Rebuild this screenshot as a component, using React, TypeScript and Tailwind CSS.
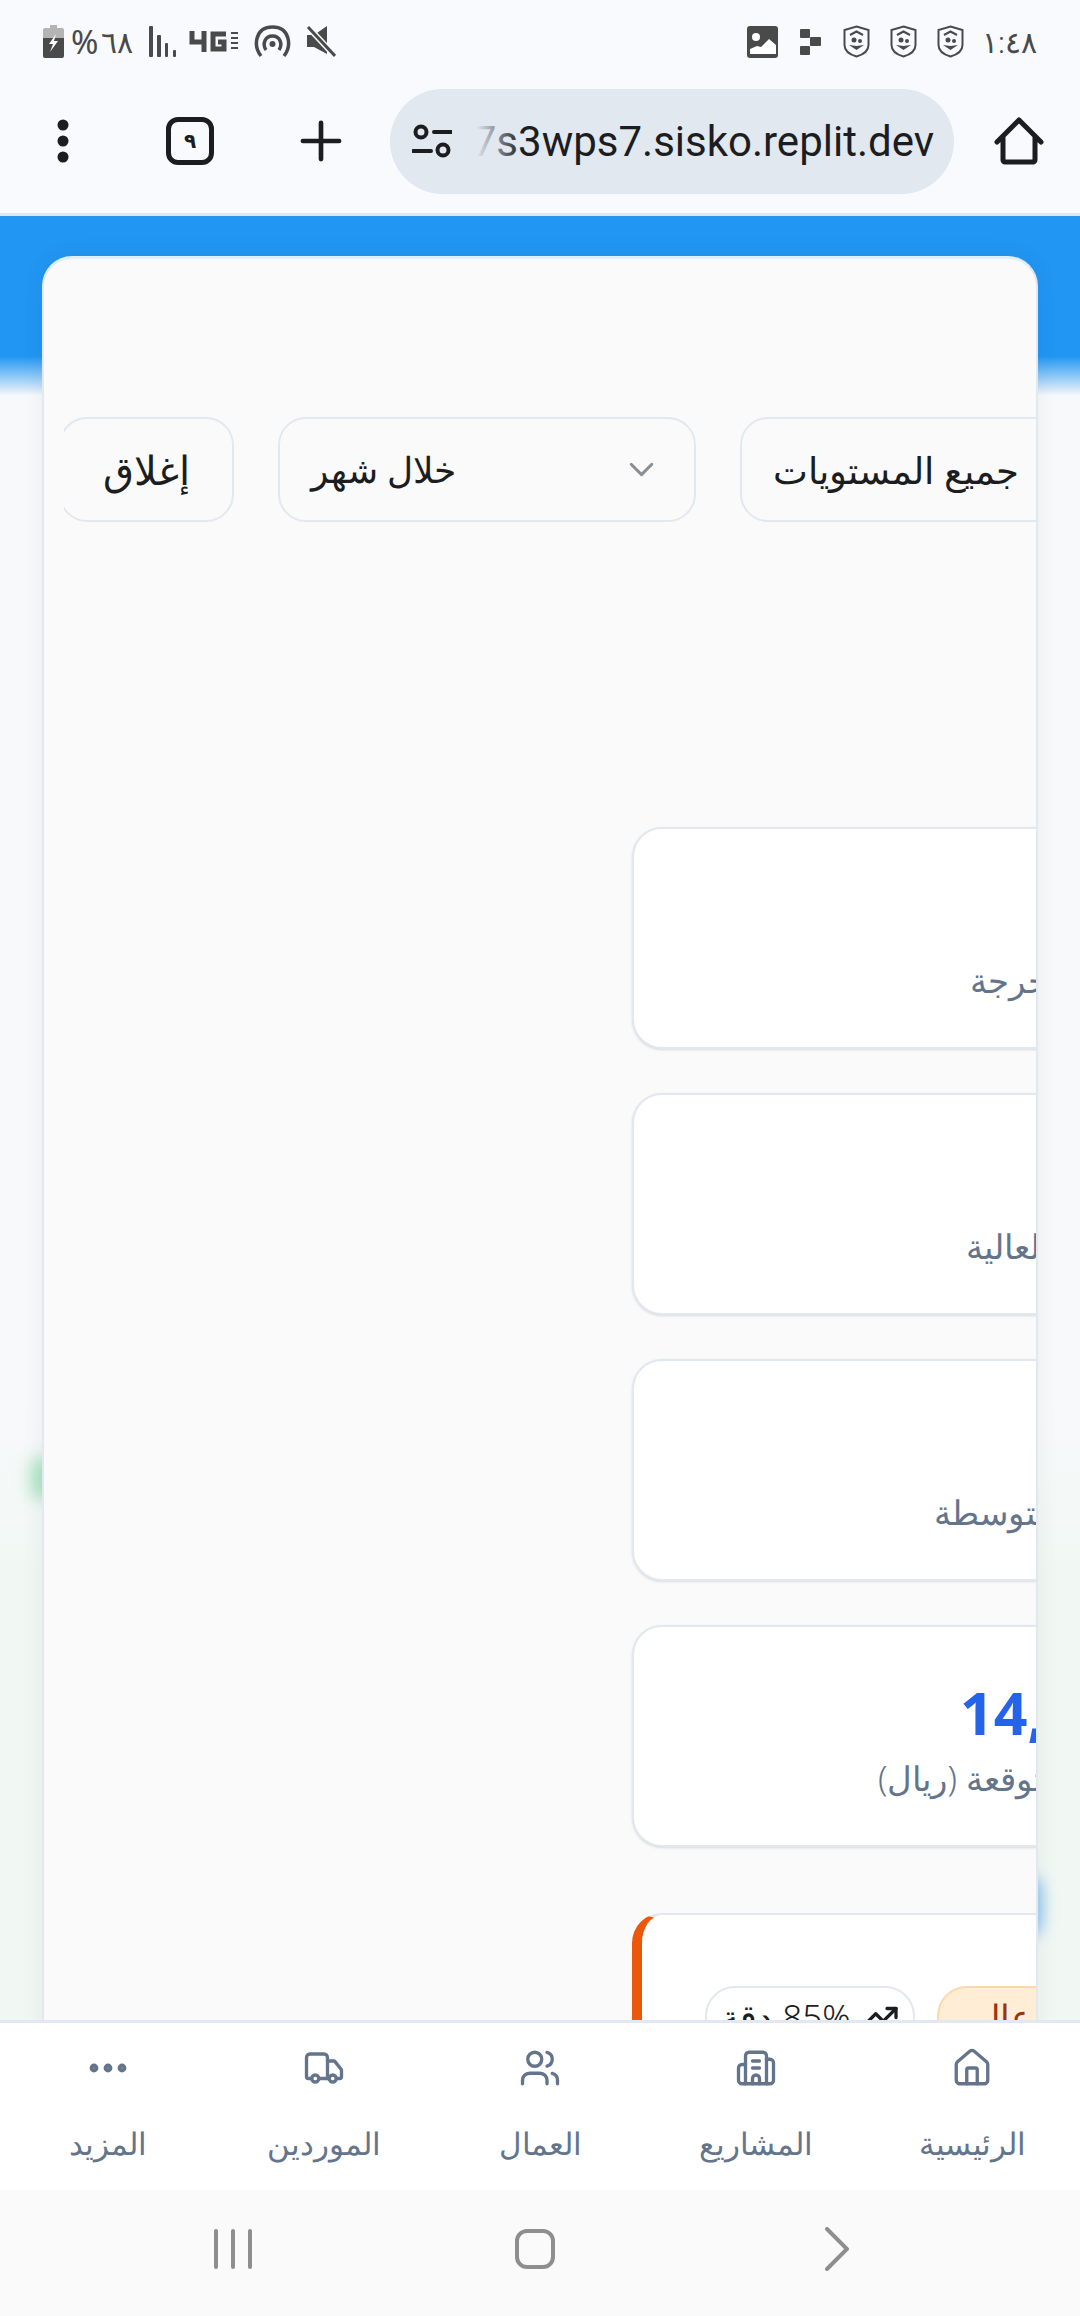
import { ChevronDown, Building2, EllipsisIcon, House, Plus, TrendingUp, Truck, Users } from 'lucide-react';

const FONT = 'font-["Noto_Sans","DejaVu_Sans",sans-serif]';

function ShieldIcon() {
  return (
    <svg width="27" height="33" viewBox="0 0 27 33" fill="none">
      <path d="M13.5 1.5 25.5 5v15c0 6-5 9.5-12 11.5C6.500 29.500 1.500 26 1.500 20V5Z" stroke="#4a4a4a" strokeWidth="2" />
      <path d="M7 10l6.500-3.500L20 10" stroke="#4a4a4a" strokeWidth="2" />
      <circle cx="11" cy="15" r="2.500" fill="#4a4a4a" />
      <circle cx="17" cy="16" r="2" fill="#4a4a4a" />
      <path d="M6 20l7.500 5 7.500-5-7.500 1Z" fill="#4a4a4a" />
    </svg>
  );
}

function StatusBar() {
  return (
    <div className="h-[65px] flex-none flex items-center justify-between pl-[43px] pr-[43px] pt-[18px] text-[#4a4a4a]">
      <div className="flex items-center">
        <svg width="21" height="33" viewBox="0 0 21 33">
          <path d="M7 0h7v3h5a2 2 0 0 1 2 2v10H0V5a2 2 0 0 1 2-2h5Z" fill="#b4b4b4" />
          <path d="M0 13h21v18a2 2 0 0 1-2 2H2a2 2 0 0 1-2-2Z" fill="#4a4a4a" />
          <path d="M13 9 6 19h4l-3 8 8-11h-4l2-7Z" fill="#fff" />
        </svg>
        <span className={`ml-[7px] text-[33px] leading-none ${FONT}`}>%</span>
        <span className={`ml-[3px] text-[30px] leading-none font-light ${FONT}`}>٦٨</span>
        <svg className="ml-[16px]" width="28" height="31" viewBox="0 0 28 31" fill="#4a4a4a">
          <rect x="0" y="0" width="4" height="31" rx="1" />
          <rect x="8" y="9" width="4" height="22" rx="1" />
          <rect x="16" y="17" width="3" height="14" rx="1" />
          <rect x="24" y="24" width="3" height="7" rx="1" />
        </svg>
        <svg className="ml-[12px]" width="50" height="22" viewBox="0 0 50 22" fill="none" stroke="#4a4a4a">
          <path d="M3 0v11h13M15 0v21" strokeWidth="5" />
          <path d="M37 3H24v15h11v-7h-6" strokeWidth="5" />
          <path d="M42 2h7M42 7h7M42 12h7M42 17h7" strokeWidth="2" />
        </svg>
        <svg className="ml-[15px]" width="37" height="33" viewBox="0 0 37 33" fill="none" stroke="#4a4a4a" strokeWidth="3.500">
          <path d="M7 31C-1 21 1 2 18.500 2S38 21 30 31" />
          <path d="M12 25c-4-6-1-14 6.500-14S29 19 25 25" />
          <circle cx="18.500" cy="19" r="3" fill="#4a4a4a" stroke="none" />
        </svg>
        <svg className="ml-[15px]" width="30" height="33" viewBox="0 0 30 33">
          <path d="M1 10h7L21 1v28L8 22H1Z" fill="#4a4a4a" />
          <path d="M2 2l27 29" stroke="#f8fafe" strokeWidth="6" />
          <path d="M2 2l27 29" stroke="#4a4a4a" strokeWidth="3" />
        </svg>
      </div>
      <div className="flex items-center">
        <svg width="31" height="32" viewBox="0 0 31 32">
          <rect width="31" height="32" rx="3" fill="#4a4a4a" />
          <circle cx="9" cy="11" r="4" fill="#fff" />
          <path d="M3 28v-5l7-3 4 1 8-8 7 6v9Z" fill="#fff" />
        </svg>
        <svg className="ml-[22px]" width="21" height="26" viewBox="0 0 21 26" fill="#4a4a4a">
          <rect x="0" y="0" width="10" height="9" rx="1" />
          <rect x="10" y="8" width="11" height="9" rx="1" />
          <rect x="0" y="17" width="10" height="9" rx="1" />
        </svg>
        <div className="ml-[22px] flex gap-[20px]">
          <ShieldIcon />
          <ShieldIcon />
          <ShieldIcon />
        </div>
        <span className={`ml-[18px] text-[30px] leading-none font-light ${FONT}`}>١:٤٨</span>
      </div>
    </div>
  );
}

function Toolbar() {
  return (
    <div className="h-[151px] flex-none flex items-center border-b-[3px] border-[#e2e8f0] text-[#1b1d20] pt-[4px]">
      <div className="w-[126px] flex justify-center">
        <svg width="14" height="44" viewBox="0 0 14 44" fill="currentColor">
          <circle cx="7" cy="6" r="5.500" />
          <circle cx="7" cy="22" r="5.500" />
          <circle cx="7" cy="38" r="5.500" />
        </svg>
      </div>
      <div className="w-[48px] h-[48px] ml-[40px] rounded-[12px] border-[5px] border-current flex items-center justify-center text-[20px] leading-none font-bold">
        <span className={FONT}>٩</span>
      </div>
      <Plus className="ml-[76px] flex-none" size={62} strokeWidth={1.800} />
      <div className="ml-[38px] w-[564px] h-[105px] flex-none rounded-full bg-[#e2e8f0] flex items-center relative overflow-hidden">
        <svg className="ml-[22px] flex-none" width="40" height="34" viewBox="0 0 40 34" fill="none" stroke="currentColor" strokeWidth="4">
          <circle cx="9" cy="8" r="5.500" />
          <path d="M22 8h18M1 27h18" strokeLinecap="round" />
          <circle cx="31" cy="26" r="5.500" />
        </svg>
        <div className="flex-1 flex justify-end overflow-hidden pr-[20px]">
          <span className='whitespace-nowrap text-[42px] font-["Roboto",sans-serif]'>7s3wps7.sisko.replit.dev</span>
        </div>
        <div className="absolute left-[62px] top-0 h-full w-[70px] bg-gradient-to-r from-[#e2e8f0] from-35% to-transparent" />
      </div>
      <svg className="ml-[40px] flex-none" width="50" height="48" viewBox="0 0 50 48" fill="none" stroke="currentColor" strokeWidth="5" strokeLinejoin="round" strokeLinecap="round">
        <path d="M3 25 25 3l22 22M9 20v23c0 1 1 2 2 2h28c1 0 2-1 2-2V20" />
      </svg>
    </div>
  );
}

interface StatCard {
  label: string;
  value?: string;
  labelClass: string;
}

const statCards: StatCard[] = [
  { label: 'المخاطر الحرجة', labelClass: 'pl-[336px]' },
  { label: 'المخاطر العالية', labelClass: 'pl-[332px]' },
  { label: 'المخاطر المتوسطة', labelClass: 'pl-[300px]' },
  { label: 'التكلفة المتوقعة (ريال)', value: '14,500', labelClass: 'pl-[244px]' },
];

function Card({ card }: { card: StatCard }) {
  return (
    <div className="h-[222px] w-[800px] rounded-[30px] border-2 border-[#e2e8f0] bg-white shadow-sm pt-[41px] flex flex-col">
      <div className="h-[88px] pl-[326px] flex items-center">
        {card.value && (
          <span className='text-[59px] leading-none font-bold text-[#2563eb] font-["Open_Sans",sans-serif]'>{card.value}</span>
        )}
      </div>
      <div className={card.labelClass}>
        <span dir="rtl" className={`inline-block whitespace-nowrap text-[34px] leading-[44px] font-light text-[#64748b] ${FONT}`}>
          {card.label}
        </span>
      </div>
    </div>
  );
}

function Modal() {
  return (
    <div className="relative h-[2000px] mx-[42px] mt-[40px] pt-[158px] pl-[20px] rounded-[30px] border-x-2 border-t-[3px] border-x-[#e2e8f0] border-t-[#dfeefb] bg-[#fafafa] overflow-hidden shadow-[0_0_24px_rgba(0,0,0,0.06)]">
      <div className="flex gap-[44px] overflow-hidden">
        <button className={`-ml-[5px] w-[175px] h-[105px] flex-none rounded-[28px] border-2 border-[#e2e8f0] text-center text-[40px] font-light text-[#1b1d20] ${FONT}`}>
          إغلاق
        </button>
        <div className="w-[418px] h-[105px] flex-none rounded-[28px] border-2 border-[#e2e8f0] flex items-center justify-between pl-[31px] pr-[32px] text-[#1b1d20]">
          <span dir="rtl" className={`text-[36px] font-light ${FONT}`}>خلال شهر</span>
          <ChevronDown size={41} className="text-[#8a8f96]" strokeWidth={1.700} />
        </div>
        <div className="w-[500px] h-[105px] flex-none rounded-[28px] border-2 border-[#e2e8f0] flex items-center pl-[31px] text-[#1b1d20]">
          <span dir="rtl" className={`whitespace-nowrap text-[37px] font-light ${FONT}`}>جميع المستويات</span>
        </div>
      </div>
      <div className="ml-[568px] mt-[305px] flex flex-col gap-[44px]">
        {statCards.map((c) => (
          <Card key={c.label} card={c} />
        ))}
        <div className="mt-[22px] h-[300px] w-[800px] rounded-[30px] border-t-2 border-t-[#e2e8f0] border-l-[10px] border-l-[#ea580c] bg-white pl-[63px] pt-[71px] flex gap-[22px]">
          <div className="w-[210px] h-[60px] flex-none rounded-full border-2 border-[#e2e8f0] flex flex-row-reverse items-center justify-center gap-[12px] text-[#1b1d20]">
            <TrendingUp size={36} strokeWidth={2.200} />
            <span dir="rtl" className={`text-[35px] font-light leading-none ${FONT}`}>85% دقة</span>
          </div>
          <div className="w-[200px] h-[60px] flex-none rounded-full border-2 border-[#fed7aa] bg-[#ffedd5] pl-[36px] flex items-center text-[#9a3412]">
            <span dir="rtl" className={`text-[35px] font-light leading-none ${FONT}`}>عال</span>
          </div>
        </div>
      </div>
    </div>
  );
}

const navItems = [
  { label: 'المزيد', icon: <EllipsisIcon size={48} strokeWidth={2.400} /> },
  { label: 'الموردين', icon: <Truck size={42} strokeWidth={1.900} /> },
  { label: 'العمال', icon: <Users size={42} strokeWidth={1.900} /> },
  { label: 'المشاريع', icon: <Building2 size={42} strokeWidth={1.900} /> },
  { label: 'الرئيسية', icon: <House size={42} strokeWidth={1.900} /> },
];

function BottomNav() {
  return (
    <div className="relative h-[170px] flex-none grid grid-cols-5 bg-white border-t-[3px] border-[#e2e8f0] text-[#64748b]">
      {navItems.map((item) => (
        <div key={item.label} className="flex flex-col items-center pt-[21px]">
          <div className="h-[48px] flex items-center justify-center">{item.icon}</div>
          <span dir="rtl" className={`mt-[30px] text-[31px] leading-[42px] font-light ${FONT}`}>{item.label}</span>
        </div>
      ))}
    </div>
  );
}

function SystemNav() {
  return (
    <div className="h-[126px] flex-none bg-[#fafafa] grid grid-cols-3 items-center text-[#8e8e8e] pb-[8px] pl-[82px] pr-[92px]">
      <div className="flex justify-center">
        <div className="flex gap-[13px]">
          <div className="w-[4px] h-[40px] rounded-full bg-current" />
          <div className="w-[4px] h-[40px] rounded-full bg-current" />
          <div className="w-[4px] h-[40px] rounded-full bg-current" />
        </div>
      </div>
      <div className="flex justify-center">
        <div className="w-[40px] h-[40px] rounded-[12px] border-[4px] border-current" />
      </div>
      <div className="flex justify-center">
        <svg width="24" height="44" viewBox="0 0 24 44" fill="none" stroke="currentColor" strokeWidth="4" strokeLinecap="round">
          <path d="M2 2l20 20L2 42" />
        </svg>
      </div>
    </div>
  );
}

export default function App() {
  return (
    <div className="w-[1080px] h-[2316px] flex flex-col overflow-hidden bg-[#f8fafe]">
      <StatusBar />
      <Toolbar />
      <main className="relative flex-1 overflow-hidden bg-[linear-gradient(to_bottom,#2196f3_0,#2196f3_140px,#f8f9fb_180px,#f8f9fb_1180px,#f1f8f4_1350px,#f1f8f4_100%)]">
        <div className="absolute left-[30px] top-[1240px] w-[26px] h-[44px] rounded-full bg-[#8fdcae] blur-[8px] opacity-70" />
        <div className="absolute left-[1014px] top-[1660px] w-[28px] h-[60px] rounded-full bg-[#6db4ee] blur-[8px] opacity-80" />
        <Modal />
      </main>
      <BottomNav />
      <SystemNav />
    </div>
  );
}
